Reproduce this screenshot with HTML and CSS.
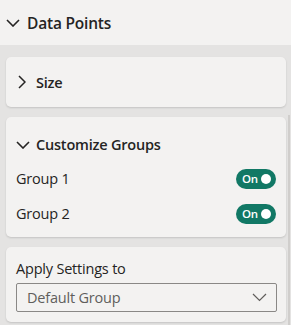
FILE: index.html
```html
<!DOCTYPE html>
<html>
<head>
<meta charset="utf-8">
<link rel="stylesheet" href="styles.css">
</head>
<body>
<div class="pane">
  <div class="header">
    <svg class="chev-down" width="14" height="8" viewBox="0 0 14 8"><path d="M1 1 L7 7 L13 1" fill="none" stroke="#252423" stroke-width="1.6"/></svg>
    <span class="title">Data Points</span>
  </div>
  <div class="cards">
    <div class="card card-size">
      <div class="card-head">
        <svg class="chev-right" width="8" height="14" viewBox="0 0 8 14"><path d="M1 1 L7 7 L1 13" fill="none" stroke="#252423" stroke-width="1.5"/></svg>
        <span class="card-title">Size</span>
      </div>
    </div>
    <div class="card card-groups">
      <div class="card-head head-down">
        <svg class="chev-down" width="14" height="8" viewBox="0 0 14 8"><path d="M1 1 L7 7 L13 1" fill="none" stroke="#252423" stroke-width="1.6"/></svg>
        <span class="card-title">Customize Groups</span>
      </div>
      <div class="row">
        <span class="label">Group 1</span>
        <span class="toggle"><span class="toggle-text">On</span><span class="knob"></span></span>
      </div>
      <div class="row">
        <span class="label">Group 2</span>
        <span class="toggle"><span class="toggle-text">On</span><span class="knob"></span></span>
      </div>
    </div>
    <div class="card card-apply">
      <div class="label apply-label">Apply Settings to</div>
      <div class="select">
        <span class="select-text">Default Group</span>
        <svg class="select-chev" width="15" height="9" viewBox="0 0 15 9"><path d="M1 1 L7.5 7.5 L14 1" fill="none" stroke="#605e5c" stroke-width="1.2"/></svg>
      </div>
    </div>
  </div>
  <div class="scrollbar"></div>
</div>
</body>
</html>
```
FILE: styles.css
```css
* { box-sizing: border-box; }
html, body { margin: 0; padding: 0; }
body {
  width: 291px;
  height: 325px;
  overflow: hidden;
  background: #e4e3e2;
  font-family: "Segoe UI", "Open Sans", "Noto Sans", sans-serif;
  color: #252423;
}
.pane { position: relative; width: 291px; height: 325px; }
.header {
  height: 45px;
  background: #f3f2f1;
  display: flex;
  align-items: center;
  padding-left: 6px;
}
.header .chev-down { margin-right: 7px; margin-top: 1px; }
.title { font-size: 15.5px; font-weight: 600; letter-spacing: -0.2px; }
.cards {
  display: flex;
  flex-direction: column;
  gap: 10px;
  padding: 12px 5px 0 6px;
}
.card {
  background: #f3f2f1;
  border-radius: 5px;
  box-shadow: 0 1px 2px rgba(0,0,0,0.14);
  width: 280px;
}
.card-size { height: 50px; display: flex; align-items: center; padding-left: 12px; }
.card-head { display: flex; align-items: center; }
.card-size .chev-right { margin-right: 10px; }
.card-title { font-size: 14.5px; font-weight: 600; letter-spacing: -0.2px; }
.card-groups { height: 120px; padding: 11px 10px 0 10px; }
.head-down { height: 33px; }
.head-down .chev-down { margin-right: 6px; }
.row {
  height: 35px;
  display: flex;
  align-items: center;
  justify-content: space-between;
}
.label { font-size: 14.5px; letter-spacing: -0.2px; }
.toggle {
  width: 40px;
  height: 20px;
  border-radius: 10px;
  background: #117865;
  display: flex;
  align-items: center;
  padding: 0 5px 0 6px;
  justify-content: space-between;
}
.toggle-text { color: #fff; font-size: 11.5px; font-weight: 600; letter-spacing: -0.3px; }
.knob { width: 10px; height: 10px; border-radius: 50%; background: #fff; }
.card-apply { height: 75px; padding: 11px 9px 0 10px; }
.apply-label { height: 25px; line-height: 22px; }
.select {
  height: 29px;
  border: 1px solid #8a8886;
  border-radius: 2px;
  display: flex;
  align-items: center;
  justify-content: space-between;
  padding: 0 9px 0 10px;
}
.select-text { font-size: 14.5px; color: #605e5c; letter-spacing: -0.2px; }
.scrollbar {
  position: absolute;
  left: 288px;
  top: 115px;
  width: 2px;
  height: 210px;
  background: #d0cecc;
}
```
